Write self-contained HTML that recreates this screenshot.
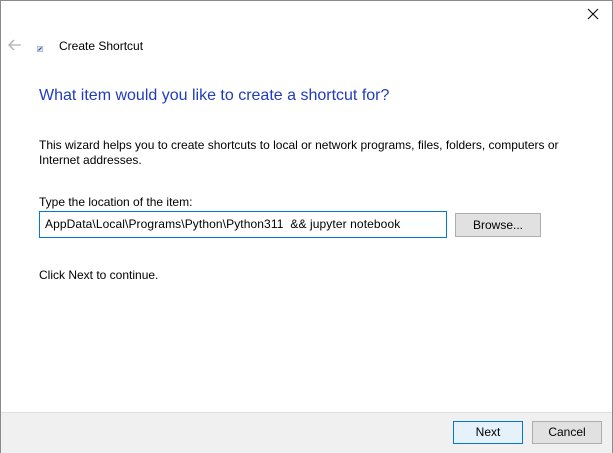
<!DOCTYPE html>
<html><head><style>
html,body{margin:0;padding:0;}
body{width:613px;height:453px;position:relative;background:#fff;font-family:"Liberation Sans",sans-serif;font-size:12px;color:#000;overflow:hidden;}
.win{position:absolute;left:0;top:0;width:611px;height:451px;border:1px solid #8a8a8a;}
.a{position:absolute;white-space:nowrap;}
.footer{position:absolute;left:1px;top:412px;width:611px;height:40px;background:#f0f0f0;border-top:1px solid #dfdfdf;}
.btn{position:absolute;box-sizing:border-box;background:#e1e1e1;border:1px solid #adadad;text-align:center;font-size:12px;}
</style></head><body>
<div class="win"></div>
<svg class="a" style="left:587px;top:8px" width="12" height="12"><path d="M1 1L11 11M11 1L1 11" stroke="#000" stroke-width="1"/></svg>
<svg class="a" style="left:8px;top:39px" width="14" height="12"><path d="M1 6H13M6 1L1 6L6 11" stroke="#b0b0b0" stroke-width="1.3" fill="none"/></svg>
<svg class="a" style="left:37px;top:46px" width="6" height="6"><rect x="0" y="0" width="6" height="6" fill="#dfe6f0" stroke="#8090a8" stroke-width="0.8"/><path d="M1.5 4.5L4.5 1.5" stroke="#1e50a0" stroke-width="1.2"/></svg>
<div class="a" style="left:59px;top:39px;font-size:12px;">Create Shortcut</div>
<div class="a" style="left:39px;top:87px;font-size:16px;color:#1f3cbf;">What item would you like to create a shortcut for?</div>
<div class="a" style="left:39px;top:138px;font-size:12px;line-height:15px;white-space:normal;width:540px;">This wizard helps you to create shortcuts to local or network programs, files, folders, computers or Internet addresses.</div>
<div class="a" style="left:39px;top:195px;font-size:12px;">Type the location of the item:</div>
<div class="a" style="left:39px;top:211px;width:408px;height:27px;border:1px solid #0078d7;box-sizing:border-box;"></div>
<div class="a" style="left:45px;top:217px;font-size:12px;letter-spacing:0.1px;">AppData\Local\Programs\Python\Python311&nbsp; &amp;&amp; jupyter notebook</div>
<div class="btn" style="left:455px;top:213px;width:86px;height:24px;line-height:22px;">Browse...</div>
<div class="a" style="left:39px;top:268px;font-size:12px;">Click Next to continue.</div>
<div class="footer"></div>
<div class="btn" style="left:453px;top:421px;width:70px;height:23px;line-height:21px;background:#e5f1fb;border-color:#0078d7;">Next</div>
<div class="btn" style="left:532px;top:421px;width:70px;height:23px;line-height:21px;">Cancel</div>
</body></html>
